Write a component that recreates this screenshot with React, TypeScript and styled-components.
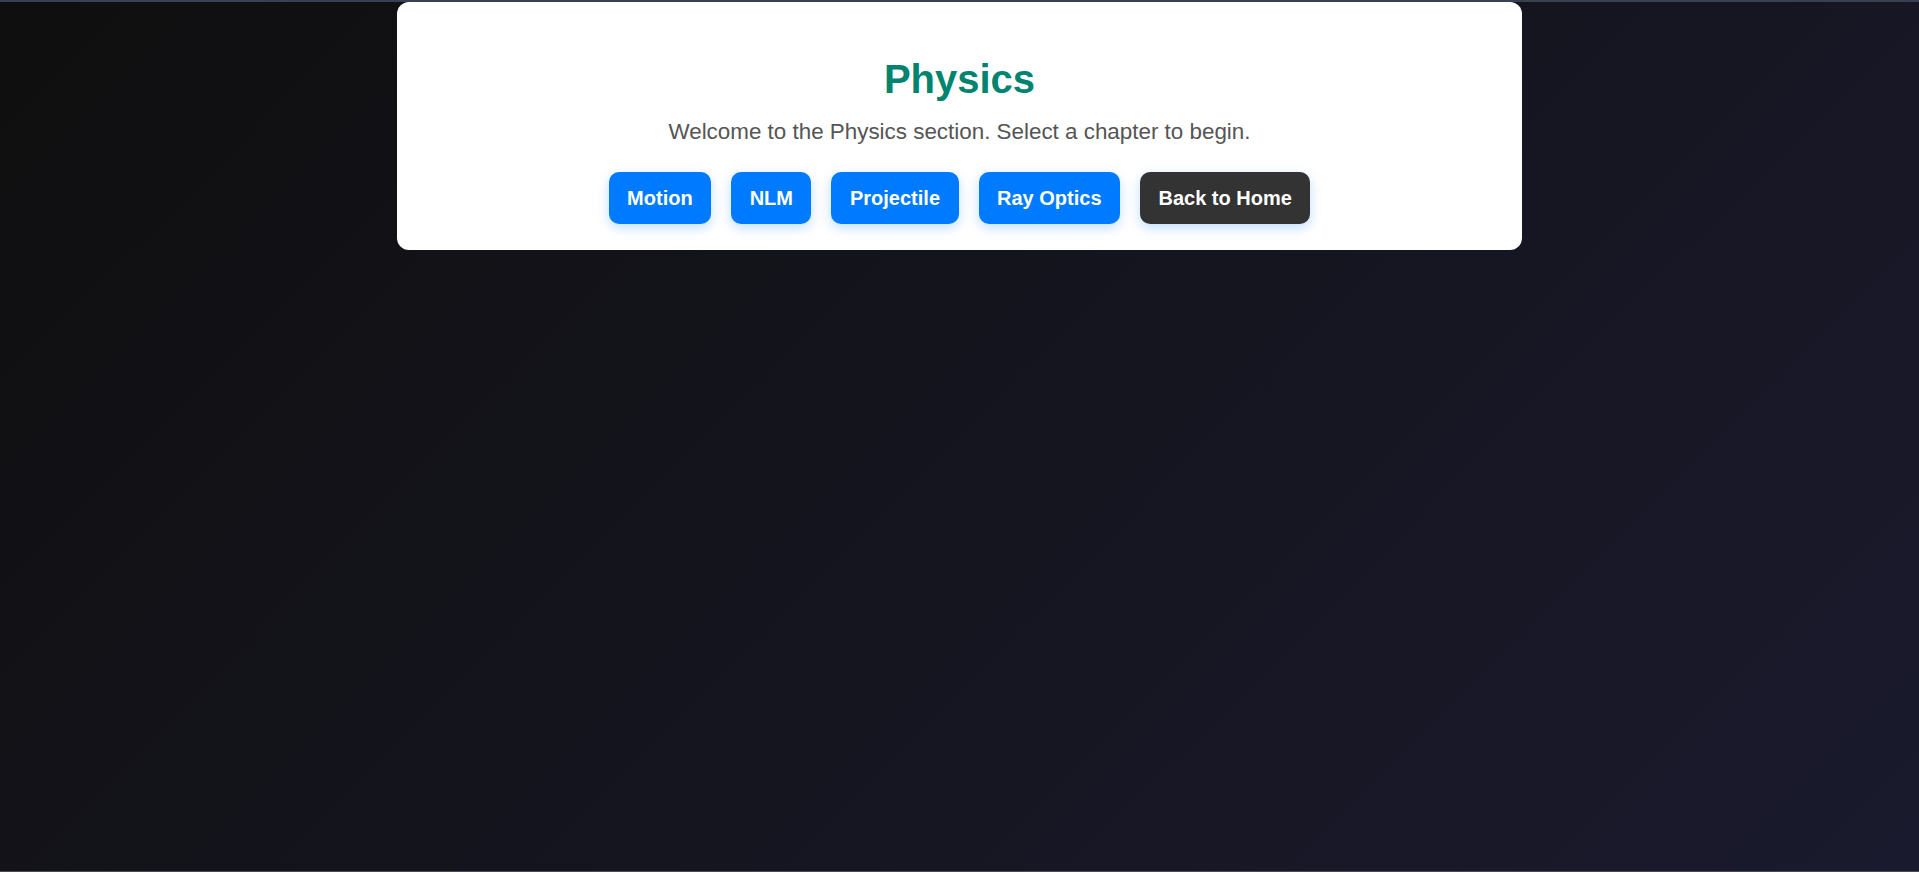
import React from "react";
import styled, { createGlobalStyle } from "styled-components";

const GlobalStyle = createGlobalStyle`
  html, body {
    margin: 0;
    padding: 0;
    height: 100%;
  }
  body {
    font-family: "Liberation Sans", Arial, Helvetica, sans-serif;
    background: linear-gradient(135deg, #0f0f0f 0%, #1a1a2e 100%);
    min-height: 100vh;
  }
  * { box-sizing: border-box; }
`;

const Page = styled.div`
  min-height: 100vh;
  display: flex;
  flex-direction: column;
  background: linear-gradient(135deg, #0f0f0f 0%, #1a1a2e 100%);
`;

const TopStrip = styled.div`
  height: 2px;
  background: #374151;
  flex: none;
`;

const Main = styled.main`
  flex: 1;
  display: flex;
  flex-direction: column;
  align-items: center;
`;

const BottomLine = styled.div`
  height: 1px;
  background: #4b4b55;
  flex: none;
`;

const Card = styled.section`
  width: 1125px;
  background: #ffffff;
  border-radius: 12px;
  padding: 54px 30px 26px;
  display: flex;
  flex-direction: column;
  align-items: center;
  text-align: center;
`;

const Title = styled.h1`
  margin: 0;
  font-size: 40px;
  line-height: 46px;
  font-weight: 700;
  color: #00846f;
`;

const Subtitle = styled.p`
  margin: 17px 0 0;
  font-size: 22.4px;
  line-height: 26px;
  color: #555555;
`;

const ButtonRow = styled.div`
  margin-top: 27px;
  display: flex;
  justify-content: center;
  gap: 20px;
`;

const ChapterButton = styled.button<{ $variant?: "primary" | "dark" }>`
  height: 52px;
  padding: 0 18.5px;
  border: none;
  border-radius: 10px;
  font-family: "Liberation Sans", Arial, Helvetica, sans-serif;
  font-size: 20px;
  font-weight: 700;
  color: #ffffff;
  background: ${(p) => (p.$variant === "dark" ? "#333333" : "#007bff")};
  box-shadow: 0 4px 12px rgba(0, 123, 255, 0.25);
  cursor: pointer;
  white-space: nowrap;
`;

const chapters = ["Motion", "NLM", "Projectile", "Ray Optics"];

export default function App() {
  return (
    <>
      <GlobalStyle />
      <Page>
        <TopStrip />
        <Main>
          <Card>
            <Title>Physics</Title>
            <Subtitle>
              Welcome to the Physics section. Select a chapter to begin.
            </Subtitle>
            <ButtonRow>
              {chapters.map((c) => (
                <ChapterButton key={c} $variant="primary">
                  {c}
                </ChapterButton>
              ))}
              <ChapterButton $variant="dark">Back to Home</ChapterButton>
            </ButtonRow>
          </Card>
        </Main>
        <BottomLine />
      </Page>
    </>
  );
}
